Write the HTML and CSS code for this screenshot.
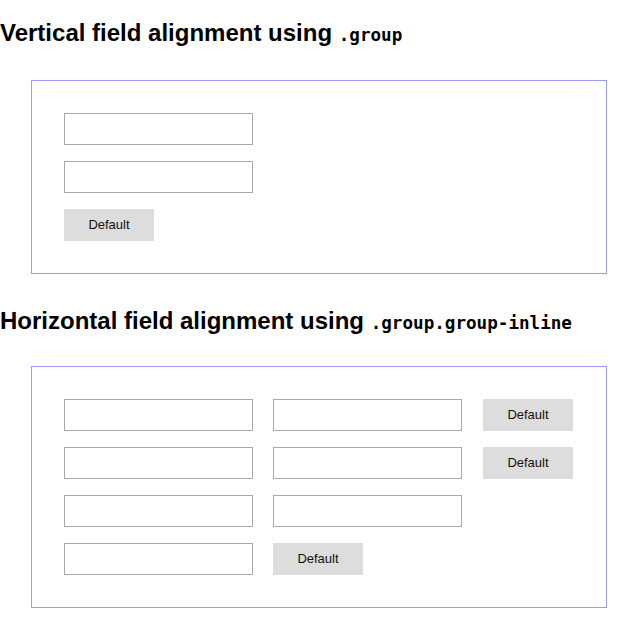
FILE: index.html
```html
<!DOCTYPE html>
<html>
<head>
<meta charset="utf-8">
<link rel="stylesheet" href="styles.css">
</head>
<body>
<h2 class="title">Vertical field alignment using <code class="code">.group</code></h2>
<div class="demo">
  <div class="group">
    <input class="field" type="text">
    <input class="field" type="text">
    <button class="btn">Default</button>
  </div>
</div>
<h2 class="title title-second">Horizontal field alignment using <code class="code">.group.group-inline</code></h2>
<div class="demo">
  <div class="group">
    <div class="group-inline">
      <input class="field" type="text">
      <input class="field" type="text">
      <button class="btn">Default</button>
    </div>
    <div class="group-inline">
      <input class="field" type="text">
      <input class="field" type="text">
      <button class="btn">Default</button>
    </div>
    <div class="group-inline">
      <input class="field" type="text">
      <input class="field" type="text">
    </div>
    <div class="group-inline">
      <input class="field" type="text">
      <button class="btn">Default</button>
    </div>
  </div>
</div>
</body>
</html>
```
FILE: styles.css
```css
html, body {
  margin: 0;
  padding: 0;
  background: #fff;
}
body {
  font-family: "Liberation Sans", Arial, sans-serif;
  color: #000;
}
.title {
  font-size: 24px;
  font-weight: bold;
  line-height: 28px;
  margin: 19px 0 31px 0;
}
.title-second {
  margin-top: 33px;
  margin-bottom: 29px;
}
.code {
  font-family: "DejaVu Sans Mono", monospace;
  font-size: 17.6px;
  font-weight: bold;
}
.demo {
  margin-left: 31px;
  width: 576px;
  box-sizing: border-box;
  border: 1px solid #9999ff;
  padding: 32px;
}
.group {
  display: flex;
  flex-direction: column;
  align-items: flex-start;
  gap: 16px;
}
.group-inline {
  display: flex;
  gap: 20px;
}
.field {
  width: 189px;
  height: 32px;
  box-sizing: border-box;
  border: 1px solid #aaa;
  margin: 0;
  padding: 0 6px;
  background: #fff;
  outline: none;
}
.btn {
  width: 90px;
  height: 32px;
  box-sizing: border-box;
  border: 0;
  margin: 0;
  background: #ddd;
  color: #111;
  font-family: "Liberation Sans", Arial, sans-serif;
  font-size: 13px;
  line-height: 31px;
  padding: 0 0 1px 0;
}
.group-inline .btn:nth-child(3) {
  margin-left: 1px;
}
```
